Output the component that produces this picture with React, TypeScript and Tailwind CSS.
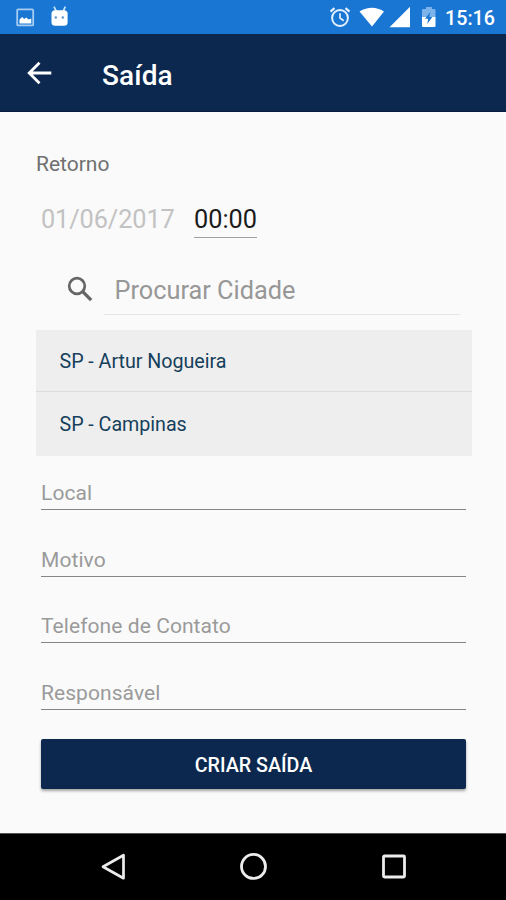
import React from "react";

function StatusBar() {
  return (
    <div className="flex h-[34px] items-center bg-[#1976d2] text-white">
      <svg className="ml-4 mt-px h-[20px] w-[20px]" viewBox="0 0 20 20" fill="none">
        <rect x="1.2" y="1.4" width="16" height="16" rx="1" stroke="#a5cdf3" strokeWidth="1.8" />
        <path d="M3.5 15.5v-4l2.7-2.6 2 2.2 2-1.7 2.3 2.1 2.8-1v5z" fill="#fff" />
      </svg>
      <svg className="ml-[14px] h-[22px] w-[20px]" viewBox="0 0 20 22" fill="none">
        <path d="M4 .6l2.2 4.6M15.3.6L13.2 5.2" stroke="#c9e2f8" strokeWidth="1.7" />
        <path d="M1.5 7.5Q1.5 4.5 5 4.2h9q3.6.3 3.6 3.3v8.7q0 3.6-3.6 3.6H5q-3.5 0-3.5-3.6z" fill="#fff" />
        <circle cx="5.8" cy="11.5" r="1.2" fill="#5794d0" />
        <circle cx="12.8" cy="11.5" r="1.2" fill="#5794d0" />
      </svg>
      <svg className="ml-auto h-[22px] w-[22px]" viewBox="0 0 22 22" fill="none" stroke="#e4f1fd">
        <circle cx="11" cy="12" r="7.9" strokeWidth="2" />
        <path d="M11 7.2V12l3.7 2.7" strokeWidth="1.7" />
        <path d="M1.5 5.7l4-3.5M20.5 5.7l-4-3.5" strokeWidth="2.2" />
      </svg>
      <svg className="ml-2 h-[20px] w-[26px]" viewBox="0 0 26 20">
        <path d="M.5 4.5Q13-3 25 4.5L13 19.5z" fill="#fff" />
      </svg>
      <svg className="ml-[4px] h-[22px] w-[22px]" viewBox="0 0 22 22">
        <path d="M21 .8v20.4H.5z" fill="#fff" />
      </svg>
      <svg className="ml-[10px] h-[22px] w-[16px]" viewBox="0 0 16 22">
        <path d="M1 4.2q0-1.2 1.2-1.2H5V1h6v2h2.3q1.2 0 1.2 1.2V11H1z" fill="#7bb3ea" />
        <path d="M1 11h13.5v8.8q0 1.2-1.2 1.2H2.2Q1 21 1 19.8z" fill="#fff" />
        <path d="M9.3 6L4 12.8h3.2L6.3 18l5-7H8.2z" fill="#1976d2" />
      </svg>
      <span className="ml-[8px] mr-[11px] mt-[3px] w-[50px] whitespace-nowrap text-[19.7px] font-medium leading-none">15:16</span>
    </div>
  );
}

function Field({ label }: { label: string }) {
  return (
    <label className="flex h-[66.8px] flex-col justify-end">
      <span className="border-b-[1.4px] border-[#858585] pb-[5px] text-[21px] leading-[22px] tracking-[0.07px] text-[#9a9a9a]">{label}</span>
    </label>
  );
}

export default function App() {
  return (
    <div className="flex h-[900px] w-[506px] flex-col overflow-hidden bg-[#fafafa] font-['Roboto',sans-serif]">
      <StatusBar />
      <header className="flex h-[78px] shrink-0 items-center border-b border-[#071b3e] bg-[#0c284f] text-white">
        <svg className="ml-[27px] h-[24px] w-[25px]" viewBox="0 0 25 24" fill="none" stroke="#fff" strokeWidth="2.8">
          <path d="M24.3 12H2.5M12.5 1.7L2.2 12l10.3 10.3" />
        </svg>
        <h1 className="ml-[50px] mt-[6px] text-[28px] font-medium leading-none tracking-[0.1px]">Saída</h1>
      </header>
      <main className="flex flex-1 flex-col pl-9 pr-[34px]">
        <p className="mt-[40px] text-[21px] leading-[24px] text-[#707070]">Retorno</p>
        <div className="ml-[5px] mt-[28px] flex h-[34px] gap-5">
          <span className="w-[133px] whitespace-nowrap text-[25.3px] leading-[31px] tracking-[-0.1px] text-[#c2c2c2]">01/06/2017</span>
          <span className="w-[63px] whitespace-nowrap border-b-[1.5px] border-[#a0a0a0] text-[25.3px] leading-[31px] text-[#1b1b1b]">00:00</span>
        </div>
        <div className="ml-[31px] mr-[12px] mt-[36px] flex h-[41px]">
          <svg className="mt-[2px] h-[27px] w-[27px]" viewBox="0 0 27 27" fill="none" stroke="#666">
            <circle cx="10" cy="10" r="7.8" strokeWidth="2.7" />
            <path d="M15.7 15.7l8.5 8.5" strokeWidth="3.3" />
          </svg>
          <div className="ml-[10px] flex-1 border-b border-[#e6e6e6] pl-[10.5px] pt-px text-[25.3px] leading-[32px] text-[#979797]">Procurar Cidade</div>
        </div>
        <ul className="mt-[15px] h-[126px] bg-[#eee] text-[19.7px] tracking-[-0.04px] text-[#153f5b]">
          <li className="flex h-[62px] items-center border-b border-[#dcdcdc] pl-[23.5px] pt-[2px]">SP - Artur Nogueira</li>
          <li className="flex h-[64px] items-center pl-[23.5px] pt-[2px]">SP - Campinas</li>
        </ul>
        <div className="-mt-[13px] ml-[5px] mr-[6px]">
          <Field label="Local" />
          <Field label="Motivo" />
          <Field label="Telefone de Contato" />
          <Field label="Responsável" />
        </div>
        <button className="ml-[5px] mr-[6px] mt-[29px] h-[50px] shrink-0 rounded-[2px] bg-[#0c284f] pt-[3px] text-[19.7px] font-medium text-white shadow-[0_2px_3px_rgba(0,0,0,0.35)]">CRIAR SAÍDA</button>
      </main>
      <nav className="flex h-[67px] shrink-0 items-center justify-between border-t border-[#555] bg-black pl-[100px] pr-[98px]">
        <svg className="h-[28px] w-[28px]" viewBox="0 0 28 28" fill="none" stroke="#ececec" strokeWidth="2.7">
          <path d="M23.5 2.2v23L3 13.7z" strokeLinejoin="round" />
        </svg>
        <svg className="h-[28px] w-[28px]" viewBox="0 0 28 28" fill="none" stroke="#ececec" strokeWidth="2.8">
          <circle cx="13.5" cy="13.4" r="12" />
        </svg>
        <svg className="h-[28px] w-[28px]" viewBox="0 0 28 28" fill="none" stroke="#ececec" strokeWidth="2.8">
          <rect x="3.5" y="3" width="21" height="21" rx="1" />
        </svg>
      </nav>
    </div>
  );
}
